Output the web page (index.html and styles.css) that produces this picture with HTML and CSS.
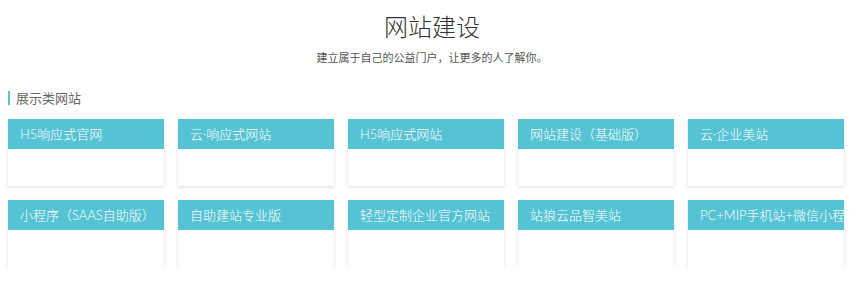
FILE: index.html
```html
<!DOCTYPE html>
<html lang="zh-CN">
<head>
    <meta charset="UTF-8">
    <meta name="viewport" content="width=device-width, initial-scale=1.0">
    <title>网站建设</title>
    <link rel="stylesheet" href="styles.css">
</head>
<body>

    <div class="intro">
        <h2 class="intro-title">网站建设</h2>
        <p class="intro-desc">建立属于自己的公益门户，让更多的人了解你。</p>
    </div>

    <div class="section">
        <h3 class="section-title">展示类网站</h3>
        <div class="card-grid">
            <div class="card"><div class="card-head">H5响应式官网</div><div class="card-body"></div></div>
            <div class="card"><div class="card-head">云·响应式网站</div><div class="card-body"></div></div>
            <div class="card"><div class="card-head">H5响应式网站</div><div class="card-body"></div></div>
            <div class="card"><div class="card-head">网站建设（基础版）</div><div class="card-body"></div></div>
            <div class="card"><div class="card-head">云·企业美站</div><div class="card-body"></div></div>
            <div class="card"><div class="card-head">小程序（SAAS自助版）</div><div class="card-body"></div></div>
            <div class="card"><div class="card-head">自助建站专业版</div><div class="card-body"></div></div>
            <div class="card"><div class="card-head">轻型定制企业官方网站</div><div class="card-body"></div></div>
            <div class="card"><div class="card-head">站狼云品智美站</div><div class="card-body"></div></div>
            <div class="card"><div class="card-head">PC+MIP手机站+微信小程序</div><div class="card-body"></div></div>
        </div>
    </div>

</body>
</html>
```

FILE: styles.css
```css
body {
    font-family: "Lato", "Noto Sans CJK SC", sans-serif;
    margin: 0;
    background-color: #fff;
    color: #333;
}
.intro {
    text-align: center;
    padding-top: 12px;
}
.intro-title {
    margin: 0;
    font-size: 24px;
    font-weight: 300;
    line-height: 30px;
    color: #333;
}
.intro-desc {
    margin: 7px 0 0;
    font-size: 11px;
    line-height: 18px;
    color: #555;
}
.section {
    padding: 0 8px;
    margin-top: 24px;
}
.section-title {
    margin: 0;
    padding-left: 6px;
    border-left: 2px solid #55c3d3;
    font-size: 13px;
    font-weight: normal;
    line-height: 14px;
    color: #666;
}
.card-grid {
    display: grid;
    grid-template-columns: repeat(5, 156px);
    gap: 14px;
    margin-top: 14px;
}
.card {
    background-color: #fff;
    box-shadow: 0 1px 3px rgba(0, 0, 0, 0.14);
}
.card-head {
    height: 30px;
    line-height: 30px;
    padding-left: 12px;
    background-color: #55c3d3;
    color: #fff;
    font-size: 13px;
    font-weight: 300;
    white-space: nowrap;
    overflow: hidden;
}
.card-body {
    height: 37px;
}
```
